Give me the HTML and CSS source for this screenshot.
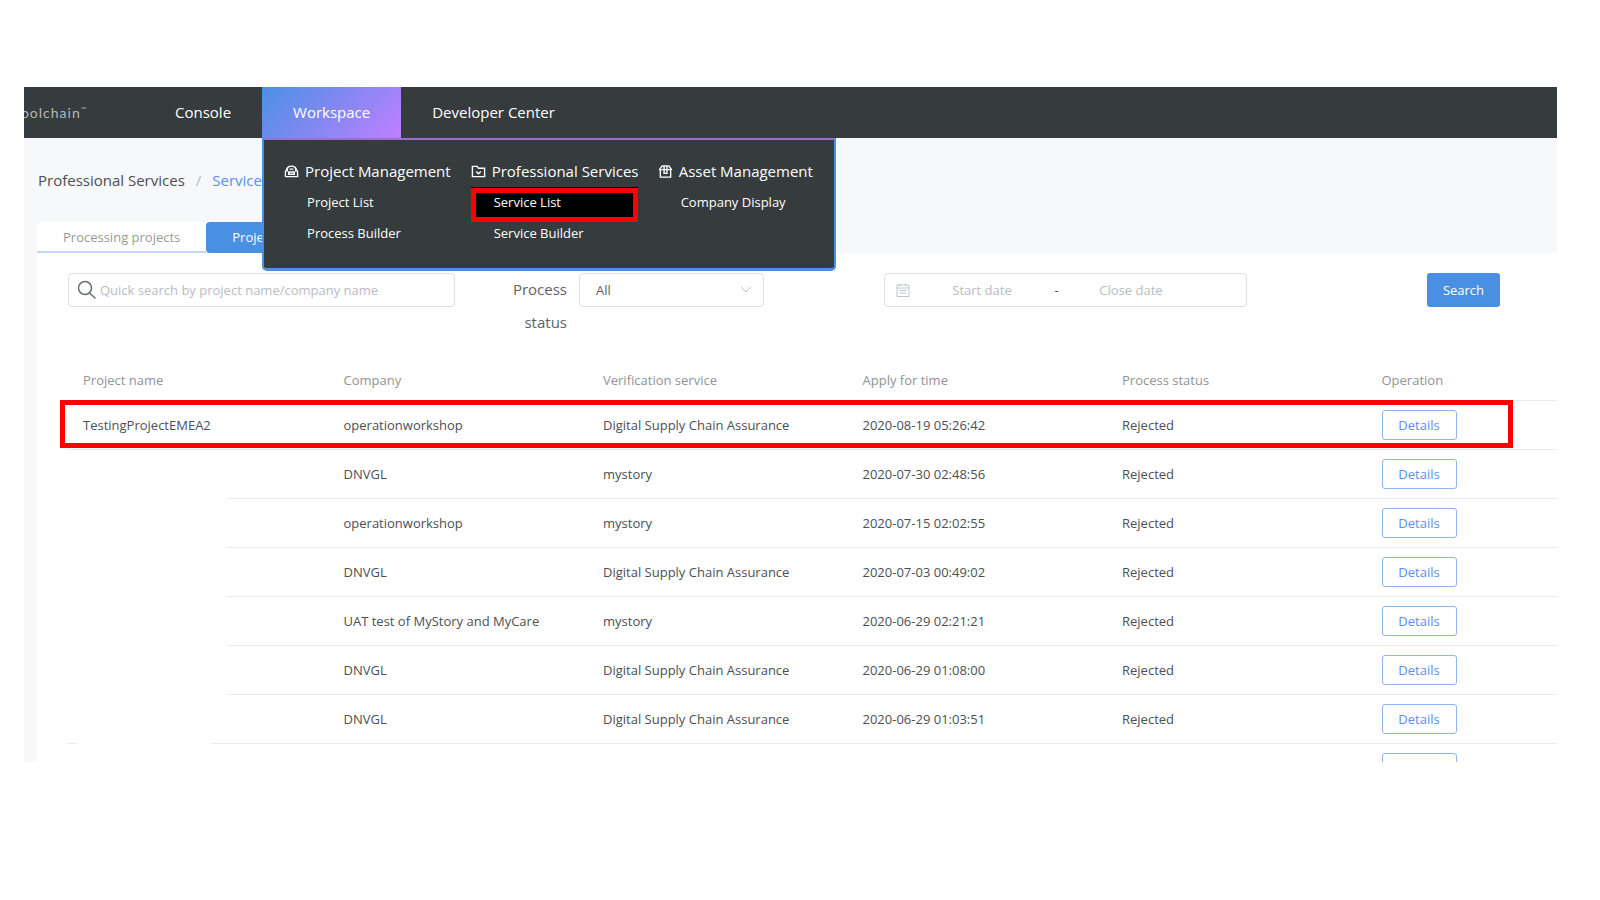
FILE: index.html
```
<!DOCTYPE html>
<html lang="en">
<head>
    <meta charset="UTF-8">
    <meta name="viewport" content="width=device-width, initial-scale=1.0">
    <title>Service List</title>
    <link rel="stylesheet" href="styles.css">
</head>
<body>
    <div class="app">
        <header class="topbar">
            <a href="#" class="logo"><span>toolchain<sup>™</sup></span></a>
            <nav class="nav">
                <a href="#" class="nav-link">Console</a>
                <div class="nav-item">
                    <a href="#" class="nav-link active">Workspace</a>
                    <div class="mega-menu">
                        <div class="menu-col">
                            <h3>
                                <svg class="menu-icon" viewBox="0 0 16 16"><path d="M1.500 13.500V8.500L4 3.500M12 3.500l2.500 5v5h-13"/><path d="M3.500 8V6c0-5 9-5 9 0v2M5 8.500h6v2.500H5zM6 5.500h4"/></svg>
                                Project Management
                            </h3>
                            <a href="#">Project List</a>
                            <a href="#">Process Builder</a>
                        </div>
                        <div class="menu-col">
                            <h3>
                                <svg class="menu-icon" viewBox="0 0 16 16"><path d="M1.500 13.500v-11h5l1.500 2h6.500v9z"/><path d="M5.500 8 8 10.500 10.500 8"/></svg>
                                Professional Services
                            </h3>
                            <a href="#" class="current">Service List</a>
                            <a href="#">Service Builder</a>
                        </div>
                        <div class="menu-col">
                            <h3>
                                <svg class="menu-icon" viewBox="0 0 16 16"><path d="M1.500 6 4.500 2h7l3 4M2.500 6v8h11V6M1 6h14"/><path d="M6.500 2v8h3V2"/></svg>
                                Asset Management
                            </h3>
                            <a href="#">Company Display</a>
                        </div>
                    </div>
                </div>
                <a href="#" class="nav-link">Developer Center</a>
            </nav>
        </header>

        <div class="breadcrumb">
            <a href="#">Professional Services</a>
            <span class="slash">/</span>
            <a href="#" class="here">Service List</a>
        </div>

        <div class="tabs">
            <button type="button" class="tab">Processing projects</button>
            <button type="button" class="tab active">Project history</button>
        </div>

        <main class="panel">
            <form class="filters">
                <div class="search-box">
                    <svg class="search-icon" viewBox="0 0 20 20"><circle cx="8" cy="8" r="6.500"/><path d="M12.500 13 18.500 18.500"/></svg>
                    <input type="text" id="keyword" aria-label="Keyword" placeholder="Quick search by project name/company name">
                </div>
                <label for="status" class="status-label">Process status</label>
                <div class="select-box">
                    <select id="status">
                        <option>All</option>
                        <option>Rejected</option>
                    </select>
                    <svg class="chevron" viewBox="0 0 12 8"><path d="M1 1l5 5 5-5"/></svg>
                </div>
                <div class="date-range">
                    <svg class="calendar" viewBox="0 0 14 14"><path d="M1 2h12v11.500H1zM1 5h12M4 .5V3M10 .5V3M3.500 7.500h7M3.500 10h7"/></svg>
                    <input type="text" aria-label="Start date" placeholder="Start date">
                    <span>-</span>
                    <input type="text" aria-label="Close date" placeholder="Close date">
                </div>
                <button type="submit" class="search-button">Search</button>
            </form>

            <div class="table-wrap">
                <table>
                    <thead>
                        <tr>
                            <th>Project name</th>
                            <th>Company</th>
                            <th>Verification service</th>
                            <th>Apply for time</th>
                            <th>Process status</th>
                            <th>Operation</th>
                        </tr>
                    </thead>
                    <tbody>
                        <tr>
                            <td>TestingProjectEMEA2</td>
                            <td>operationworkshop</td>
                            <td>Digital Supply Chain Assurance</td>
                            <td>2020-08-19 05:26:42</td>
                            <td>Rejected</td>
                            <td><button type="button" class="details">Details</button></td>
                        </tr>
                        <tr>
                            <td class="blank"></td>
                            <td>DNVGL</td>
                            <td>mystory</td>
                            <td>2020-07-30 02:48:56</td>
                            <td>Rejected</td>
                            <td><button type="button" class="details">Details</button></td>
                        </tr>
                        <tr>
                            <td class="blank"></td>
                            <td>operationworkshop</td>
                            <td>mystory</td>
                            <td>2020-07-15 02:02:55</td>
                            <td>Rejected</td>
                            <td><button type="button" class="details">Details</button></td>
                        </tr>
                        <tr>
                            <td class="blank"></td>
                            <td>DNVGL</td>
                            <td>Digital Supply Chain Assurance</td>
                            <td>2020-07-03 00:49:02</td>
                            <td>Rejected</td>
                            <td><button type="button" class="details">Details</button></td>
                        </tr>
                        <tr>
                            <td class="blank"></td>
                            <td>UAT test of MyStory and MyCare</td>
                            <td>mystory</td>
                            <td>2020-06-29 02:21:21</td>
                            <td>Rejected</td>
                            <td><button type="button" class="details">Details</button></td>
                        </tr>
                        <tr>
                            <td class="blank"></td>
                            <td>DNVGL</td>
                            <td>Digital Supply Chain Assurance</td>
                            <td>2020-06-29 01:08:00</td>
                            <td>Rejected</td>
                            <td><button type="button" class="details">Details</button></td>
                        </tr>
                        <tr>
                            <td class="blank last"></td>
                            <td>DNVGL</td>
                            <td>Digital Supply Chain Assurance</td>
                            <td>2020-06-29 01:03:51</td>
                            <td>Rejected</td>
                            <td><button type="button" class="details">Details</button></td>
                        </tr>
                        <tr>
                            <td></td>
                            <td></td>
                            <td></td>
                            <td></td>
                            <td></td>
                            <td><button type="button" class="details">Details</button></td>
                        </tr>
                    </tbody>
                </table>
                <div class="highlight"></div>
            </div>
        </main>
    </div>
</body>
</html>
```
FILE: styles.css
```
* {
    box-sizing: border-box;
}
body {
    margin: 0;
    background-color: #ffffff;
    color: #4c4f54;
    font-family: "Open Sans", "Noto Sans", sans-serif;
    font-size: 13px;
}
a {
    color: inherit;
    text-decoration: none;
}
button,
input,
select {
    font-family: inherit;
    font-size: 13px;
}
svg {
    flex: none;
    fill: none;
    stroke: currentColor;
}
.app {
    height: 75vh;
    margin: 87px 43px 0 24px;
    overflow: hidden;
    background-color: #f7f8fa;
}

/* Top bar */
.topbar {
    display: flex;
    height: 51px;
    background-color: #363b3e;
    color: #ffffff;
}
.logo {
    display: flex;
    align-items: center;
    justify-content: flex-end;
    width: 63px;
    overflow: hidden;
    color: #b4b7b9;
    font-family: Lato, sans-serif;
    font-size: 14px;
    letter-spacing: 1px;
}
.logo sup {
    font-size: 7px;
}
.nav {
    display: flex;
    margin-left: 57px;
}
.nav-item {
    position: relative;
}
.nav-link {
    display: block;
    padding: 0 31px;
    font-size: 15px;
    line-height: 51px;
}
.nav-link.active {
    background: linear-gradient(135deg, #4a90e2, #c07fff);
}
.mega-menu {
    position: absolute;
    top: 51px;
    left: 0;
    z-index: 10;
    display: flex;
    gap: 20px;
    width: 574px;
    height: 133px;
    padding: 16px 20px;
    border: 2px solid #4a90e2;
    border-top-color: #9b6fd0;
    border-bottom-width: 3px;
    border-radius: 0 0 5px 5px;
    background-color: #363b3e;
}
.menu-col {
    width: 167px;
    white-space: nowrap;
}
.menu-col h3 {
    display: flex;
    align-items: center;
    gap: 6px;
    margin: 0 0 1px;
    font-size: 15px;
    font-weight: 400;
    line-height: 30px;
}
.menu-icon {
    width: 15px;
    height: 15px;
    stroke-width: 1.5;
}
.menu-col a {
    position: relative;
    display: block;
    padding-left: 23px;
    line-height: 31px;
}
.menu-col .current {
    background-color: #000000;
}
.menu-col .current::after {
    content: "";
    position: absolute;
    inset: 1px 0 -4px 0;
    border: 5px solid #ff0000;
}

/* Page head */
.breadcrumb {
    display: flex;
    gap: 11px;
    padding: 26px 14px;
    font-size: 15px;
    line-height: 32px;
}
.slash {
    color: #b4b8c0;
}
.here {
    color: #5b8ff0;
}
.tabs {
    display: flex;
    margin-left: 13px;
}
.tab {
    height: 31px;
    padding: 0 26px;
    border: 0;
    border-bottom: 2px solid #c3d5f5;
    border-radius: 4px 0 0 0;
    background-color: #ffffff;
    color: #9a9a9a;
}
.tab.active {
    border-color: #4a90e2;
    border-radius: 4px;
    background-color: #4a90e2;
    color: #ffffff;
}

/* Filters */
.panel {
    margin-left: 13px;
    padding: 20px 0 0 31px;
    background-color: #ffffff;
}
.filters {
    display: flex;
    align-items: flex-start;
    height: 86px;
    padding-right: 57px;
}
.search-box,
.select-box,
.date-range {
    display: flex;
    align-items: center;
    height: 34px;
    border: 1px solid #dcdfe6;
    border-radius: 4px;
}
.filters input,
.filters select {
    min-width: 0;
    padding: 0;
    border: 0;
    outline: 0;
    background: none;
    color: #606266;
}
.filters input::placeholder {
    color: #b8bcc4;
}
.search-box {
    flex: 0 0 387px;
    padding: 0 8px;
    gap: 3px;
}
.search-box input {
    flex: 1;
}
.search-icon {
    width: 20px;
    height: 20px;
    color: #6b6e73;
    stroke-width: 1.5;
}
.status-label {
    width: 60px;
    margin: 0 12px 0 52px;
    color: #606266;
    font-size: 15px;
    line-height: 33px;
    text-align: right;
}
.select-box {
    position: relative;
    flex: 0 0 185px;
}
.filters select {
    width: 100%;
    height: 32px;
    padding: 0 16px;
    appearance: none;
}
.chevron {
    position: absolute;
    right: 11px;
    width: 12px;
    height: 8px;
    color: #c0c4cc;
    pointer-events: none;
}
.date-range {
    flex: 0 0 363px;
    margin-left: 120px;
    padding-left: 11px;
}
.date-range input {
    width: 116px;
    text-align: center;
}
.date-range span {
    width: 33px;
    text-align: center;
}
.calendar {
    width: 14px;
    height: 14px;
    margin-right: 14px;
    color: #c0c4cc;
}
.search-button {
    height: 34px;
    width: 73px;
    margin-left: auto;
    border: 0;
    border-radius: 3px;
    background-color: #4a90e2;
    color: #ffffff;
}

/* Table */
.table-wrap {
    position: relative;
}
table {
    width: calc(100% + 68px);
    table-layout: fixed;
    border-collapse: separate;
    border-spacing: 0;
}
th,
td {
    position: relative;
    height: 49px;
    padding: 0 16px;
    border-bottom: 1px solid #e8eaee;
    text-align: left;
}
th:first-child,
td:first-child {
    padding-left: 15px;
}
th {
    height: 42px;
    color: #909399;
    font-weight: 400;
}
.blank::after {
    content: "";
    position: absolute;
    top: 10px;
    left: 0;
    bottom: -1px;
    width: 160px;
    background-color: #ffffff;
}
.blank.last::after {
    left: 9px;
    width: 134px;
}
.details {
    display: block;
    width: 75px;
    height: 30px;
    padding: 0;
    border: 1px solid #8fb4ee;
    border-radius: 3px;
    background-color: #ffffff;
    color: #5b8ff0;
}
.highlight {
    position: absolute;
    top: 41px;
    left: -8px;
    right: 44px;
    height: 48px;
    border: 5px solid #ff0000;
}
```
